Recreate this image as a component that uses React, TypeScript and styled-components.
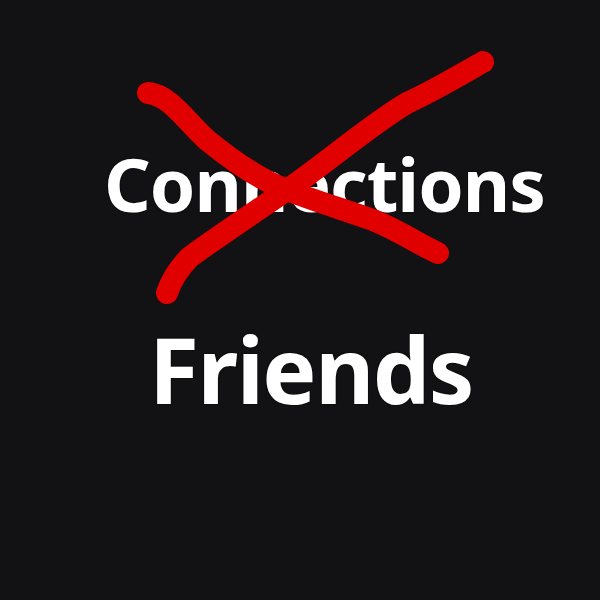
import React from "react";
import styled, { createGlobalStyle } from "styled-components";

const Global = createGlobalStyle`
  html, body { margin: 0; padding: 0; background: #121214; }
  #root { width: 600px; height: 600px; }
`;

const Frame = styled.div`
  position: relative;
  width: 600px;
  height: 600px;
  background: #121214;
  overflow: hidden;
`;

const Column = styled.div`
  display: flex;
  flex-direction: column;
  align-items: flex-start;
  padding-top: 147px;
  gap: 104px;
`;

const Label = styled.div<{ $size: number; $indent: number; $track: number }>`
  font-family: "Noto Sans", "DejaVu Sans", sans-serif;
  font-weight: 700;
  font-size: ${(p) => p.$size}px;
  line-height: 1;
  color: #ffffff;
  padding-left: ${(p) => p.$indent}px;
  text-shadow: 0 0 2px #000;
  letter-spacing: ${(p) => p.$track}px;
`;

const Scribble = styled.svg`
  position: absolute;
  inset: 0;
  pointer-events: none;
`;

export default function App() {
  return (
    <Frame>
      <Global />
      <Column>
        <Label $size={73} $indent={104} $track={-1}>Connections</Label>
        <Label $size={91} $indent={149} $track={-1.5}>Friends</Label>
      </Column>
      <Scribble width="600" height="600" viewBox="0 0 600 600">
        <path
          d="M148 93 C170 95 185 120 207 140 C235 163 260 180 287 190 C315 201 345 210 373 220 C400 231 420 245 438 253"
          fill="none"
          stroke="#e00000"
          strokeWidth="22"
          strokeLinecap="round"
          strokeLinejoin="round"
        />
        <path
          d="M483 62 C460 75 435 90 407 103 C370 125 330 160 287 190 C255 212 220 235 190 257 C180 267 172 278 167 293"
          fill="none"
          stroke="#e00000"
          strokeWidth="22"
          strokeLinecap="round"
          strokeLinejoin="round"
        />
      </Scribble>
    </Frame>
  );
}
